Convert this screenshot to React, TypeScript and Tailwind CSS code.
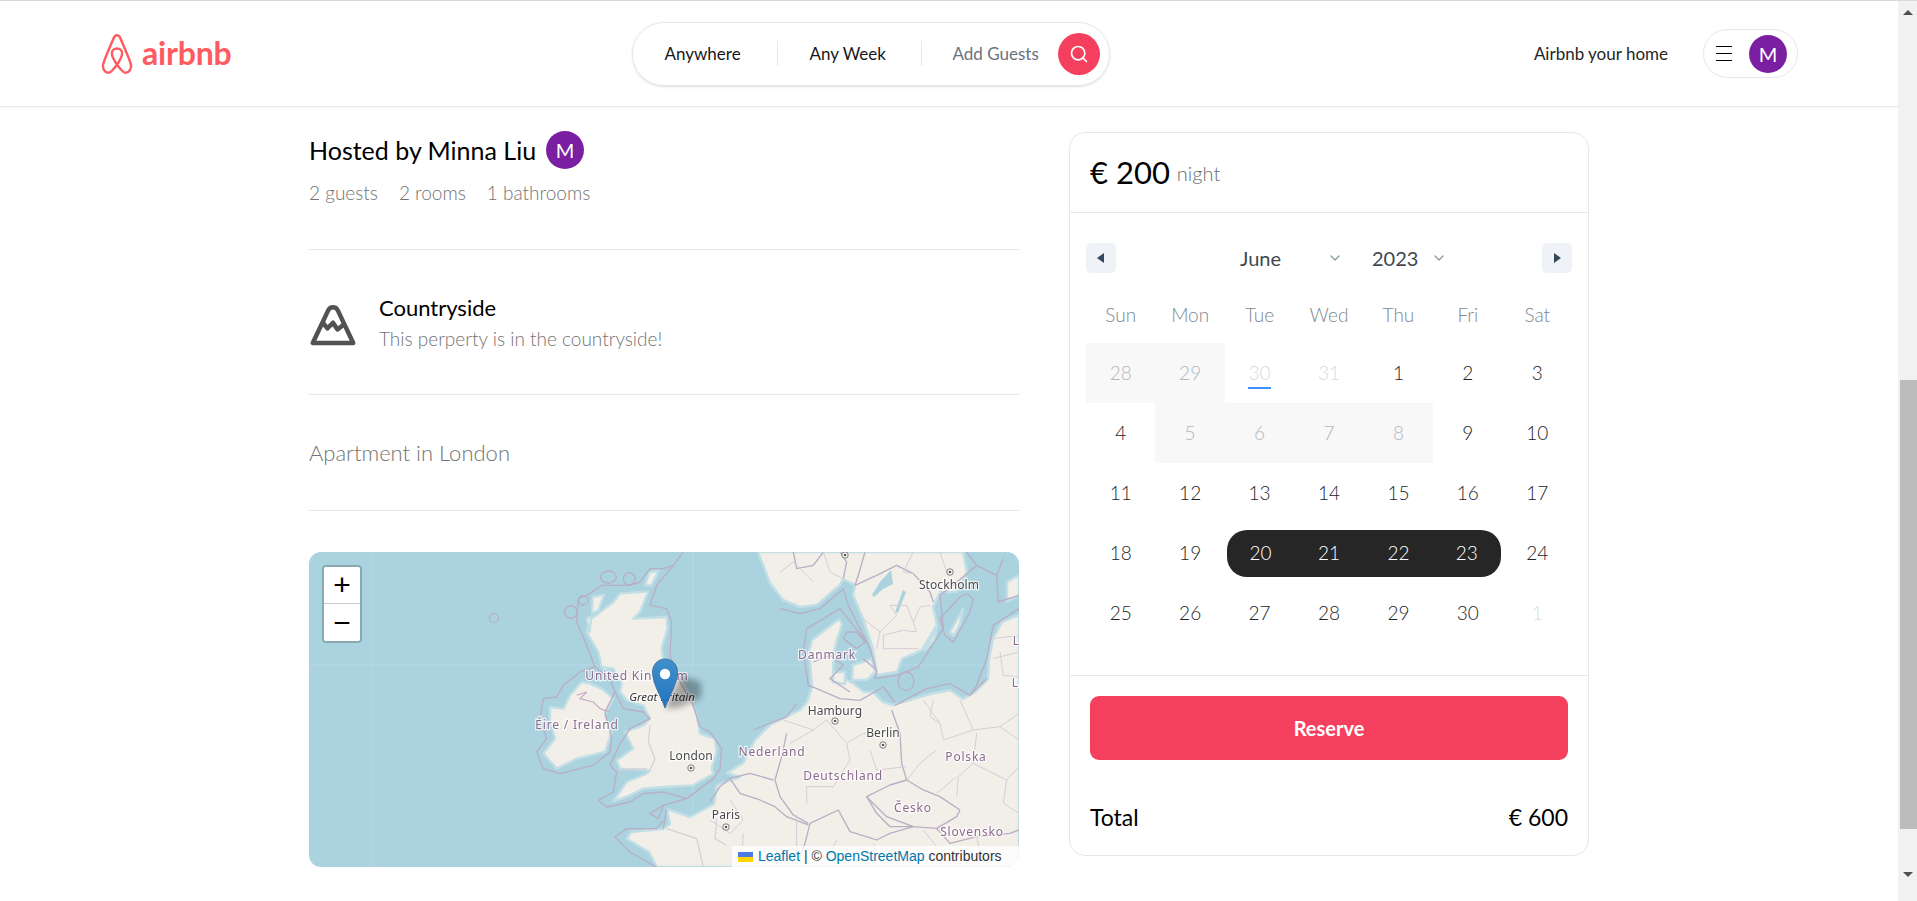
import React from 'react';
import { Search, ChevronDown } from 'lucide-react';
import { TbMountain } from 'react-icons/tb';

const weekDays = ['Sun', 'Mon', 'Tue', 'Wed', 'Thu', 'Fri', 'Sat'];

const calendar: number[][] = [
    [28, 29, 30, 31, 1, 2, 3],
    [4, 5, 6, 7, 8, 9, 10],
    [11, 12, 13, 14, 15, 16, 17],
    [18, 19, 20, 21, 22, 23, 24],
    [25, 26, 27, 28, 29, 30, 1],
];

// row index + day index -> classes for one calendar cell
const cellClass = (row: number, col: number) => {
    if (row === 0 && col < 2) return 'bg-[#f8f8f8] text-[#aeb9bf]';
    if (row === 0 && col < 4) return 'text-[#d5dce0]';
    if (row === 1 && col > 0 && col < 5) return 'bg-[#f8f8f8] text-[#aeb9bf]';
    if (row === 4 && col === 6) return 'text-[#d5dce0]';
    return 'text-[#1d2429]';
};

const mapLabels = [
    { text: 'Stockholm', x: 640, y: 37, kind: 'city' },
    { text: 'Hamburg', x: 526, y: 163, kind: 'city' },
    { text: 'Berlin', x: 574, y: 185, kind: 'city' },
    { text: 'London', x: 382, y: 208, kind: 'city' },
    { text: 'Paris', x: 417, y: 267, kind: 'city' },
    { text: 'Danmark', x: 518, y: 107, kind: 'country' },
    { text: 'Nederland', x: 463, y: 204, kind: 'country' },
    { text: 'Polska', x: 657, y: 209, kind: 'country' },
    { text: 'Deutschland', x: 534, y: 228, kind: 'country' },
    { text: 'Česko', x: 604, y: 260, kind: 'country' },
    { text: 'Slovensko', x: 663, y: 284, kind: 'country' },
    { text: 'United Kingdom', x: 328, y: 128, kind: 'country' },
    { text: 'Éire / Ireland', x: 268, y: 177, kind: 'country' },
];

const mapDots = [[536, 3], [641, 20], [526, 169], [574, 193], [382, 216], [417, 275]];

const Logo = () => (
    <div className="flex items-center gap-[7px] text-[#ff5a5f]">
        <svg width="36" height="40" viewBox="0 0 36 47" fill="none" stroke="currentColor" strokeWidth="2.8" strokeLinejoin="round">
            <path d="M18 36C14 41 11 46 8 45.5C3 45.5 .5 40 2 34.5C4 28 12 10 14 5C15 2.5 16.5 1.5 18 1.5C19.5 1.5 21 2.5 22 5C24 10 32 28 34 34.5C35.5 40 33 45.5 28 45.5C25 46 22 41 18 36C14 30 12 26 12 22.5C12 19 15 17 18 17C21 17 24 19 24 22.5C24 26 22 30 18 36Z" />
        </svg>
        <span className="text-[32px] leading-none font-bold tracking-[-0.2px] mt-[-2px]">airbnb</span>
    </div>
);

const Avatar = () => (
    <div className="flex h-[38px] w-[38px] items-center justify-center rounded-full bg-[#7b1fa2] text-[20px] text-white">M</div>
);

const Navbar = () => (
    <header className="flex h-[106px] shrink-0 items-center border-b border-[#e5e5e5] pl-[99px] pr-[100px] shadow-[0_1px_2px_rgba(0,0,0,0.03)]">
        <Logo />
        <div className="ml-[401px] flex h-[64px] w-[478px] items-center rounded-full border border-[#e5e7eb] pl-[31px] pr-[9px] shadow-sm">
            <span className="w-[82px] text-[17px] text-[#171717]">Anywhere</span>
            <div className="mx-[31px] h-[25px] w-px bg-[#e5e7eb]" />
            <span className="w-[82px] text-[17px] text-[#171717]">Any Week</span>
            <div className="mx-[30px] h-[25px] w-px bg-[#e5e7eb]" />
            <span className="w-[92px] text-[17px] text-[#6b7280]">Add Guests</span>
            <div className="ml-auto flex h-[42px] w-[42px] items-center justify-center rounded-full bg-[#f43f5e] text-white">
                <Search size={20} strokeWidth={2} />
            </div>
        </div>
        <span className="ml-auto text-[17px] text-[#262626]">Airbnb your home</span>
        <div className="ml-[35px] flex h-[49px] w-[95px] items-center rounded-full border border-[#e5e7eb] pl-[12px] pr-[10px]">
            <div className="flex w-[16px] flex-col gap-[5.5px]">
                <div className="h-[1.5px] bg-black" />
                <div className="h-[1.5px] bg-black" />
                <div className="h-[1.5px] bg-black" />
            </div>
            <div className="ml-auto"><Avatar /></div>
        </div>
    </header>
);

const MapDrawing = () => (
    <svg className="h-full w-full blur-[0.35px]" viewBox="0 0 710 315">
        <rect width="710" height="315" fill="#aad3df" />
        <path d="M63 0V315M384 0V315M0 113H710" stroke="#b4d8e2" strokeWidth="1" />

        {/* land */}
        <g fill="#f2efe9" stroke="#c3dfe6" strokeWidth="2.5" strokeLinejoin="round">
            {/* mainland europe */}
            <path d="M318 287L322 280L354 277L361 272L358 257L381 265L405 252L408 233L431 225L418 221L434 211L446 188L461 173L491 158L498 150L503 135L500 100L503 88L530 67L533 72L528 88L525 100L524 118L532 125L545 132L555 140L564 140L574 150L584 153L621 142L641 138L654 147L666 140L679 127L680 107L684 87L693 70L710 63V315H348L340 300Z" />
            {/* norway and sweden */}
            <path d="M449 0L461 31L474 48L491 55L508 53L531 33L534 27L546 33L544 43L554 67L564 97L568 123L588 120L593 107L613 98L628 73L624 55L631 40L648 40L658 20L654 0Z" />
            <path d="M698 30L710 23V43L698 50Z" />
            <path d="M641 80L654 57L651 72L645 84Z" />
            <path d="M616 98L628 74L625 88Z" />
            <path d="M544 113L563 107L566 120L558 128L543 128Z" />
            <path d="M524 120L536 120L536 132L524 130Z" />
            <g transform="translate(221 0) scale(0.3333)" strokeWidth="7">
                {/* great britain */}
                <path d="M270 125L355 118L330 180L310 200L410 195L412 230L395 290L400 320L450 370L480 430L500 490L510 545L555 560L560 600L545 650L550 665L490 700L400 705L340 710L300 730L250 748L290 690L350 665L360 655L270 650L260 625L310 590L285 540L340 520L360 500L340 460L290 445L270 420L275 395L250 350L215 345L205 300L170 240L185 200L250 150Z" />
                {/* ireland */}
                <path d="M60 465L100 470L120 430L155 390L180 395L215 410L250 440L235 470L225 490L245 540L225 600L140 620L80 650L40 605L75 560L60 510Z" />
                <path d="M188 135L222 128L205 175L186 185Z" />
                <path d="M170 198L184 195L178 240Z" />
                <path d="M358 62L385 56L365 100L345 100Z" />
            </g>
        </g>

        {/* water inside land */}
        <g fill="#aad3df">
            <path d="M563 43L571 30L582 18L584 32L574 37L565 45Z" />
            <path d="M586 60L594 38L597 40L589 61Z" />
        </g>

        {/* maritime lines and coast lines */}
        <g fill="none" stroke="#b9aec3" strokeWidth="1.2" strokeLinejoin="round">
            <g transform="translate(221 0) scale(0.3333)" strokeWidth="4">
                <path d="M460 0L430 40L400 50L360 50L330 90L300 100L215 100L170 130L145 140L140 210L170 280L195 345L150 360L100 400L80 435L40 440L30 500L50 560L20 600L40 650L90 665L190 640L240 600L245 560L225 480L255 420L240 380L195 345" />
                <path d="M240 640L260 660L250 720L205 745L230 765L300 750L340 725L400 720L470 740L550 680L570 650L575 590L540 540L510 525L490 460L450 390L420 310L425 210L410 170L360 160L380 100L430 40" />
                <path d="M255 420L280 470L340 480L360 500L300 530L270 575L240 640" />
                <ellipse cx="235" cy="75" rx="24" ry="18" />
                <circle cx="298" cy="80" r="18" />
                <circle cx="123" cy="180" r="19" />
                <circle cx="160" cy="145" r="14" />
                <path d="M470 740L400 760L360 785L385 800L400 760M400 830L410 770" />
                <path d="M400 805L380 830L290 830L255 855L300 900L380 945" />
            </g>
            <circle cx="185" cy="66" r="4.5" />
            <g transform="translate(471 0) scale(0.3333)" strokeWidth="4">
                <path d="M0 170L60 185L120 170L190 110L205 160L270 290L290 360L285 380L350 370L415 345L490 230L480 130L520 100L590 40L560 0" />
                <path d="M70 300L80 230L180 170L260 270M70 300L85 400L110 410L180 440L240 445L310 405L345 450M345 460L440 410L510 395L570 430L620 380" />
                <path d="M570 430L590 400L620 320L640 220L717 170M590 40L650 70L670 20M650 70L655 150L717 130" />
                <path d="M480 200L495 250L520 270L570 180L580 140L560 125L540 135Z" />
                <path d="M190 260L230 290L255 270L230 240L200 240Z" />
                <ellipse cx="378" cy="388" rx="24" ry="28" />
                <path d="M40 0L50 50L100 40L130 0M190 80L200 30L180 0M225 100L235 70L255 0" />
                <path d="M100 330L150 310L190 340L150 380L210 420M250 320L285 350M225 100L290 70L350 40L400 65L450 120L460 150" />
            </g>
            <g transform="translate(401 148) scale(0.3333)" strokeWidth="4">
                <path d="M0 305L30 260L60 235L120 220L190 240" />
                <path d="M230 100L215 170L195 240L210 290L250 345L295 370M60 235L90 280L150 300L195 320L230 350L295 375" />
                <path d="M545 30L570 100L575 190L590 240L540 255L470 290L500 340L540 380L610 380M590 240L640 270L690 290L750 330" />
                <path d="M470 290L530 350L610 380L680 385L740 350L750 330M680 385L720 430L800 410L900 400L927 390" />
                <path d="M300 370L385 330L420 395L500 420L540 400L610 380M300 370L285 430L260 500" />
                <path d="M130 90L230 50L260 10" />
            </g>
        </g>

        {/* thin inner borders */}
        <g fill="none" stroke="#d6ccd6" strokeWidth="0.9" strokeLinejoin="round">
            <g transform="translate(401 148) scale(0.3333)" strokeWidth="3">
                <path d="M690 70L700 120L790 90L870 80L927 120M680 150L630 190L590 240M800 100L790 190L745 230L740 290M790 190L890 240L927 200M740 230L680 280M890 240L880 310L927 340" />
                <path d="M410 130L460 100L545 90M410 130L420 180L370 260L290 260L290 310M480 150L500 210L590 200M240 130L310 90L350 60L410 130M220 60L310 90M640 0L690 70M750 0L790 90M870 80L927 40M670 0L660 50L690 70" />
                <path d="M0 360L60 400L100 360L60 300M100 400L95 500M260 345L260 500M380 420L340 500M490 430L520 500M640 390L680 440L640 500M800 410L820 500" />
            </g>
            <g transform="translate(471 0) scale(0.3333)" strokeWidth="3">
                <path d="M250 200L300 240L350 190L330 160L380 160L400 210L410 240L370 235L310 250L310 290L360 290L415 290M400 210L420 165L450 160M300 240L290 290M0 60L40 30L100 90M130 0L150 60L190 80M400 0L370 60L400 65M480 0L500 60M640 260L717 250M640 320L717 300M660 300L670 370L717 375" />
            </g>
            <g transform="translate(221 0) scale(0.3333)" strokeWidth="3.5">
                <path d="M140 430L170 420L150 440L190 450L210 470L240 480" stroke="#c9a9c4" />
                <path d="M360 520L355 570L375 620L360 655M265 655L350 650" />
                <path d="M560 800L555 860L590 880M410 830L500 860L520 945" />
            </g>
        </g>

        {mapDots.map(([x, y]) => (
            <g key={`${x}-${y}`}>
                <circle cx={x} cy={y} r="3.2" fill="#fff" stroke="#6b6b6b" strokeWidth="0.9" />
                <circle cx={x} cy={y} r="1.3" fill="#555" />
            </g>
        ))}

        <g className="[font-family:'Noto_Sans',sans-serif] [paint-order:stroke]" textAnchor="middle" fontSize="12" stroke="#ffffff" strokeOpacity="0.75" strokeWidth="2.5">
            {mapLabels.map(l => (
                <text key={l.text} x={l.x} y={l.y} fill={l.kind === 'city' ? '#4a4a4a' : '#8a6a8c'} letterSpacing={l.kind === 'city' ? 0.1 : 0.8}>{l.text}</text>
            ))}
            <text x="353" y="149" fill="#333" fontStyle="italic" fontSize="11.5">Great Britain</text>
            <text x="707" y="93" fill="#8a6a8c">L</text>
            <text x="706" y="135" fill="#8a6a8c">L</text>
        </g>

        {/* marker with its shadow */}
        <path d="M356 156L372 124L392 130L392 146L368 156Z" fill="#000" opacity="0.32" className="blur-[3px]" />
        <defs>
            <linearGradient id="pin" x1="0" y1="0" x2="0" y2="1">
                <stop offset="0" stopColor="#3f90c9" />
                <stop offset="1" stopColor="#2274c4" />
            </linearGradient>
        </defs>
        <path d="M356 156C352 144 343.500 132 343.500 120C343.500 112.500 349 107 356 107C363 107 368.500 112.500 368.500 120C368.500 132 360 144 356 156Z" fill="url(#pin)" stroke="#2e6c97" strokeWidth="0.8" />
        <circle cx="356" cy="122" r="5.2" fill="#fff" />
    </svg>
);

const ListingMap = () => (
    <div className="relative mt-[41px] h-[315px] w-[710px] overflow-hidden rounded-xl">
        <MapDrawing />
        <div className="absolute left-[13px] top-[13px] w-[40px] rounded-[4px] border-2 border-black/20 bg-clip-padding [font-family:'Liberation_Sans',sans-serif]">
            <div className="flex h-[37px] items-center justify-center rounded-t-[2px] border-b border-[#ccc] bg-white text-[30px] leading-none text-black">+</div>
            <div className="flex h-[37px] items-center justify-center rounded-b-[2px] bg-white text-[30px] leading-none text-black">−</div>
        </div>
        <div className="absolute bottom-0 right-0 flex h-[21px] w-[287px] items-center bg-white/80 pl-[6px] text-[14px] text-[#333] [font-family:'Liberation_Sans',sans-serif]">
            <svg className="mr-[5px]" width="15" height="10" viewBox="0 0 15 10">
                <rect width="15" height="5" fill="#4c7be1" />
                <rect y="5" width="15" height="5" fill="#ffd500" />
            </svg>
            <span className="whitespace-nowrap"><span className="text-[#0078a8]">Leaflet</span> | © <span className="text-[#0078a8]">OpenStreetMap</span> contributors</span>
        </div>
    </div>
);

const Listing = () => (
    <div className="w-[710px]">
        <div className="mt-[24px] flex h-[38px] items-center gap-[10px]">
            <span className="text-[25px] leading-none text-black">Hosted by Minna Liu</span>
            <Avatar />
        </div>
        <div className="mt-[12px] flex h-[24px] items-center gap-[21px] text-[19px] font-light text-[#737373]">
            <span>2 guests</span>
            <span>2 rooms</span>
            <span>1 bathrooms</span>
        </div>
        <div className="mt-[44px] h-px bg-[#e5e7eb]" />
        <div className="mt-[43px] flex h-[60px]">
            <TbMountain className="ml-[-3px] mt-[5px] text-[#525252]" size={54} />
            <div className="ml-[19px]">
                <div className="text-[22px] leading-[30px] text-black">Countryside</div>
                <div className="mt-[3px] text-[19px] leading-[26px] font-light text-[#737373]">This perperty is in the countryside!</div>
            </div>
        </div>
        <div className="mt-[41px] h-px bg-[#e5e7eb]" />
        <div className="mt-[43px] text-[22px] leading-[30px] font-light text-[#737373]">Apartment in London</div>
        <div className="mt-[42px] h-px bg-[#e5e7eb]" />
        <ListingMap />
    </div>
);

const NavArrow = ({ dir }: { dir: 'left' | 'right' }) => (
    <div className="flex h-[30px] w-[30px] items-center justify-center rounded-[5px] bg-[#eff2f7]">
        <svg width="8" height="10" viewBox="0 0 8 10" fill="#34495e">
            {dir === 'left' ? <path d="M7 0V10L0 5Z" /> : <path d="M1 0V10L8 5Z" />}
        </svg>
    </div>
);

const Calendar = () => (
    <div className="px-[16px] pt-[29px]">
        <div className="flex h-[32px] items-center">
            <NavArrow dir="left" />
            <span className="ml-[124px] w-[47px] text-[20px] text-[#3e484f]">June</span>
            <ChevronDown className="ml-[40px] text-[#8b9ba3]" size={16} />
            <span className="ml-[29px] w-[46px] text-[20px] text-[#3e484f]">2023</span>
            <ChevronDown className="ml-[13px] text-[#8b9ba3]" size={16} />
            <div className="ml-auto"><NavArrow dir="right" /></div>
        </div>
        <div className="mt-[26px] grid grid-cols-7 text-center text-[19px] font-light text-[#7d888e]">
            {weekDays.map(d => <div key={d} className="leading-[30px]">{d}</div>)}
        </div>
        <div className="mt-[13px] grid grid-cols-7 text-center text-[19px] font-light">
            {calendar.map((week, r) => week.map((day, c) => {
                const inRange = r === 3 && c >= 2 && c <= 5;
                if (inRange) {
                    return (
                        <div key={`${r}-${c}`} className="flex h-[60px] items-center">
                            <div className={`flex h-[47px] w-full items-center justify-center bg-[#262626] text-white ${c === 2 ? 'ml-[2px] rounded-l-[20px]' : ''} ${c === 5 ? 'mr-[2px] rounded-r-[20px]' : ''}`}>{day}</div>
                        </div>
                    );
                }
                return (
                    <div key={`${r}-${c}`} className={`relative flex h-[60px] items-center justify-center ${cellClass(r, c)}`}>
                        {day}
                        {r === 0 && c === 2 && <div className="absolute bottom-[14px] h-[2px] w-[23px] bg-[#3d91ff]" />}
                    </div>
                );
            }))}
        </div>
    </div>
);

const ReserveCard = () => (
    <div className="mt-[25px] h-[724px] w-[520px] rounded-2xl border border-[#e5e7eb]">
        <div className="flex h-[79px] items-center gap-[7px] px-[20px]">
            <span className="text-[31px] leading-none text-black">€ 200</span>
            <span className="text-[20px] font-light text-[#6b6b6b]">night</span>
        </div>
        <div className="h-px bg-[#e5e7eb]" />
        <div className="h-[462px]"><Calendar /></div>
        <div className="h-px bg-[#e5e7eb]" />
        <div className="px-[20px] pt-[20px]">
            <div className="flex h-[64px] items-center justify-center rounded-[9px] bg-[#f43f5e] text-[20px] font-bold text-white">Reserve</div>
            <div className="mt-[41px] flex items-center justify-between text-[23px] leading-[32px] text-black">
                <span>Total</span>
                <span>€ 600</span>
            </div>
        </div>
    </div>
);

const Scrollbar = () => (
    <div className="flex h-full w-[19px] shrink-0 flex-col bg-[#f1f1f1]">
        <svg className="ml-[5px] mt-[9px]" width="10" height="5" viewBox="0 0 10 5" fill="#505050"><path d="M5 0L10 5H0Z" /></svg>
        <div className="ml-[2px] mt-[365px] h-[449px] bg-[#bcbcbc]" />
        <svg className="ml-[5px] mt-[43px]" width="10" height="5" viewBox="0 0 10 5" fill="#505050"><path d="M0 0H10L5 5Z" /></svg>
    </div>
);

const App: React.FC = () => {
    return (
        <div className="flex h-[901px] overflow-hidden border-t border-[#d9d9d9] bg-white [font-family:Lato,sans-serif]">
            <div className="min-w-0 flex-1">
                <Navbar />
                <main className="flex justify-center gap-[50px]">
                    <Listing />
                    <ReserveCard />
                </main>
            </div>
            <Scrollbar />
        </div>
    );
};

export default App;
